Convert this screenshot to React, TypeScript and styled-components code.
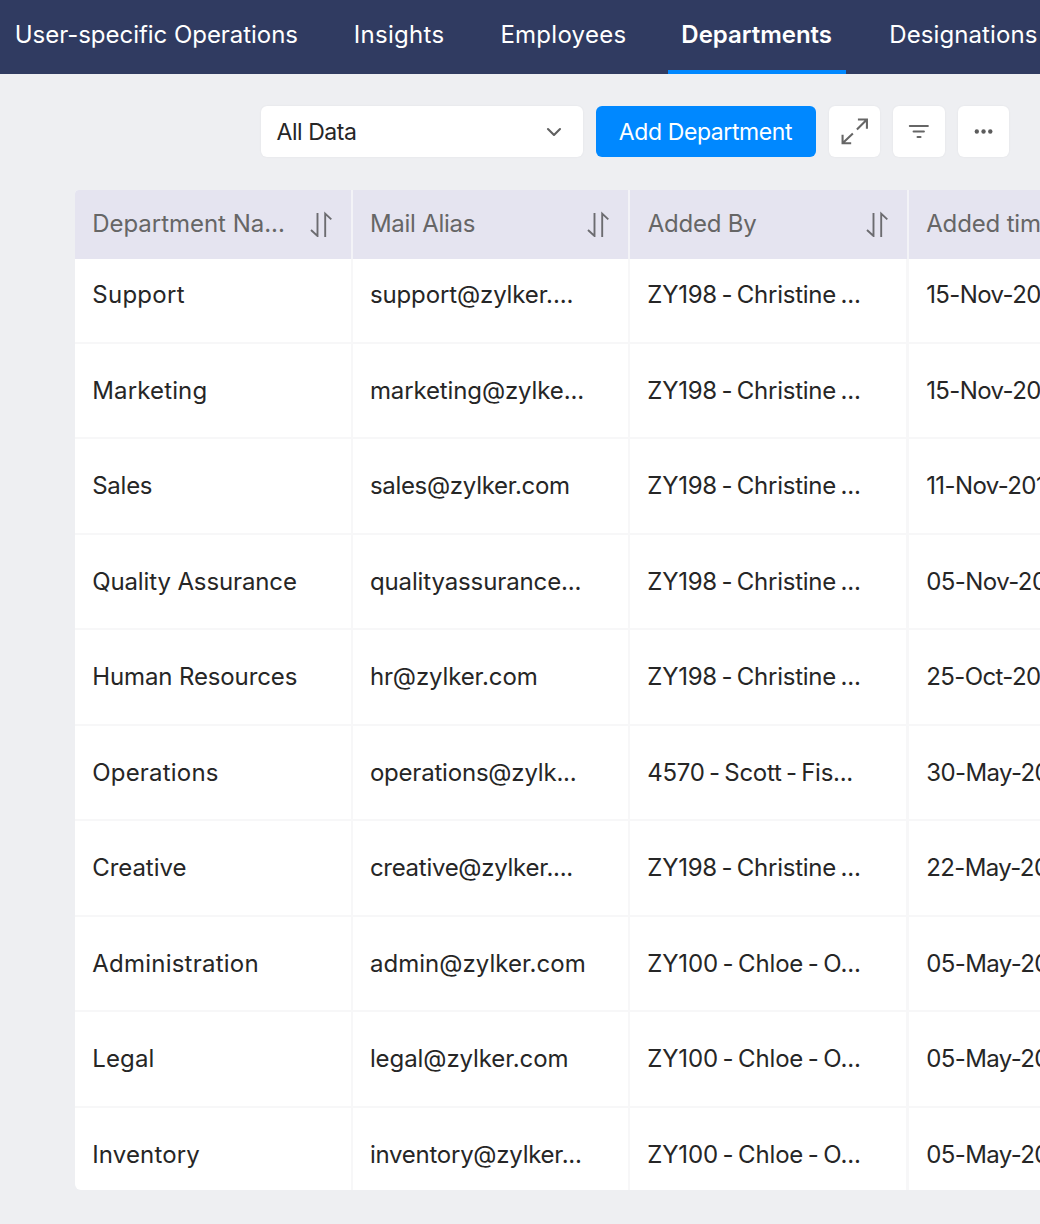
import React from 'react';
import styled, { createGlobalStyle } from 'styled-components';

const GlobalStyle = createGlobalStyle`
  * { box-sizing: border-box; }
  body {
    margin: 0;
    background: #eeeff2;
    font-family: Inter, "Liberation Sans", sans-serif;
    color: #262626;
    overflow: hidden;
  }
`;

const Page = styled.div`
  width: 1040px;
  height: 1224px;
  overflow: hidden;
  background: #eeeff2;
`;

const NavBar = styled.nav`
  display: flex;
  gap: 28.4px;
  height: 74px;
  background: #303b61;
`;

const Tab = styled.div<{ $active?: boolean; $width: number; $track: number }>`
  flex: none;
  width: ${p => p.$width}px;
  padding-left: ${p => (p.$active ? 13.8 : 14.8)}px;
  border-bottom: 4px solid ${p => (p.$active ? '#0088ff' : 'transparent')};
  color: #fff;
  font-size: 24px;
  font-weight: ${p => (p.$active ? 600 : 400)};
  line-height: 69px;
  letter-spacing: ${p => p.$track}px;
  white-space: nowrap;
`;

const Toolbar = styled.div`
  display: flex;
  justify-content: flex-end;
  gap: 13px;
  padding: 32px 31px 33px 0;
`;

const Select = styled.div`
  display: flex;
  align-items: center;
  justify-content: space-between;
  width: 322px;
  height: 51px;
  padding: 0 20px 0 16px;
  border-radius: 6px;
  background: #fff;
  box-shadow: 0 0 2px rgba(60, 60, 80, 0.08);
  font-size: 23px;
  letter-spacing: -0.45px;
`;

const PrimaryButton = styled.button`
  width: 220px;
  height: 51px;
  padding: 0;
  border: 0;
  border-radius: 6px;
  background: #0088ff;
  color: #fff;
  font-family: inherit;
  font-size: 23px;
  letter-spacing: -0.4px;
`;

const IconButton = styled.button`
  display: flex;
  width: 51.5px;
  height: 51px;
  padding: 0;
  border: 0;
  border-radius: 6px;
  background: #fff;
  box-shadow: 0 0 2px rgba(60, 60, 80, 0.08);
`;

const Table = styled.div`
  width: 1110px;
  margin-left: 75px;
  border-radius: 4px 0 0 6px;
  overflow: hidden;
  background: #fff;
`;

const columns = 'grid-template-columns: 277.7px 277.8px 278.5px 276px;';

const HeaderRow = styled.div`
  position: relative;
  z-index: 1;
  display: grid;
  ${columns}
  height: 68.5px;
  background: #e5e4f0;
`;

const HeaderCell = styled.div<{ $track: number }>`
  display: flex;
  align-items: center;
  justify-content: space-between;
  padding: 0 19px 0 17.2px;
  border-right: 2px solid #f3f3f7;
  color: #666;
  font-size: 24px;
  line-height: 68px;
  letter-spacing: ${p => p.$track}px;
  white-space: nowrap;
`;

/* The list is scrolled slightly, so its first row slides under the header. */
const Body = styled.div`
  height: 941.9px;
  margin-top: -10.4px;
  overflow: hidden;
`;

const Row = styled.div`
  display: grid;
  ${columns}
  height: 95.5px;
  border-bottom: 2px solid #f7f7f8;
`;

const Cell = styled.div<{ $track: number; $wide?: boolean }>`
  padding-left: ${p => (p.$wide ? 16.8 : 17.2)}px;
  border-right: ${p => (p.$wide ? 3 : 2)}px solid #f7f7f8;
  font-size: 24px;
  line-height: 94px;
  letter-spacing: ${p => p.$track}px;
  word-spacing: ${p => (p.$wide ? -2 : 0)}px;
  white-space: nowrap;
`;

const SortIcon = () => (
  <svg width="22" height="26" viewBox="0 0 22 26" fill="none" stroke="#6c6c70" strokeWidth="1.9">
    <path d="M1 19L7.5 25V2M15.2 26V2.6L21.3 8.4" />
  </svg>
);

const ChevronIcon = () => (
  <svg width="18" height="12" viewBox="0 0 18 12" fill="none" stroke="#606060" strokeWidth="2.1" strokeLinecap="round" strokeLinejoin="round">
    <path d="M3 3L9 8.9L15 3" />
  </svg>
);

const ExpandIcon = () => (
  <svg width="52" height="51" viewBox="0 0 52 51" fill="none" stroke="#666" strokeWidth="2.1">
    <path d="M29.2 13.4H38.3V22.6M38.3 13.4L28.2 23.4M13.7 28.8V37.4H22.4M13.7 37.4L24.1 27.6" />
  </svg>
);

const FilterIcon = () => (
  <svg width="52" height="51" viewBox="0 0 52 51" fill="none" stroke="#666" strokeWidth="2.1" strokeLinecap="round">
    <path d="M17 20H35.2M20.8 25.5H31.2M24.8 31H27.8" />
  </svg>
);

const MoreIcon = () => (
  <svg width="52" height="51" viewBox="0 0 52 51" fill="#5c5c5c">
    <circle cx="19" cy="25.5" r="2.2" />
    <circle cx="25.8" cy="25.5" r="2.2" />
    <circle cx="32.6" cy="25.5" r="2.2" />
  </svg>
);

// Each label carries its own tracking in pixels.
type Label = [text: string, track: number];

const tabs: { label: Label; width: number; active?: boolean }[] = [
  { label: ['User-specific Operations', -0.04], width: 310.5 },
  { label: ['Insights', 0.3], width: 118.3 },
  { label: ['Employees', 0.27], width: 153.6 },
  { label: ['Departments', -0.02], width: 178.5, active: true },
  { label: ['Designations', 0.1], width: 178 },
];

const headers: Label[] = [
  ['Department Na...', -0.03],
  ['Mail Alias', -0.25],
  ['Added By', -0.2],
  ['Added tim', -0.15],
];

const christine: Label = ['ZY198 - Christine ...', -0.24];
const scott: Label = ['4570 - Scott - Fis...', -0.28];
const chloe: Label = ['ZY100 - Chloe - O...', -0.15];

const rows: Label[][] = [
  [['Support', 0.3], ['support@zylker....', -0.12], christine, ['15-Nov-20', -0.6]],
  [['Marketing', 0.15], ['marketing@zylke...', -0.12], christine, ['15-Nov-20', -0.6]],
  [['Sales', -0.25], ['sales@zylker.com', -0.3], christine, ['11-Nov-201', -0.6]],
  [['Quality Assurance', -0.12], ['qualityassurance...', -0.12], christine, ['05-Nov-20', -0.55]],
  [['Human Resources', -0.12], ['hr@zylker.com', -0.12], christine, ['25-Oct-20', -0.6]],
  [['Operations', 0.2], ['operations@zylk...', -0.2], scott, ['30-May-20', -0.6]],
  [['Creative', -0.05], ['creative@zylker....', -0.28], christine, ['22-May-20', -0.6]],
  [['Administration', 0.24], ['admin@zylker.com', 0.04], chloe, ['05-May-20', -0.6]],
  [['Legal', 0.15], ['legal@zylker.com', -0.08], chloe, ['05-May-20', -0.6]],
  [['Inventory', 0.15], ['inventory@zylker...', -0.25], chloe, ['05-May-20', -0.6]],
];

export default function App() {
  return (
    <Page>
      <GlobalStyle />
      <NavBar>
        {tabs.map(t => (
          <Tab key={t.label[0]} $width={t.width} $track={t.label[1]} $active={t.active}>
            {t.label[0]}
          </Tab>
        ))}
      </NavBar>
      <Toolbar>
        <Select>All Data<ChevronIcon /></Select>
        <PrimaryButton>Add Department</PrimaryButton>
        <IconButton aria-label="Expand"><ExpandIcon /></IconButton>
        <IconButton aria-label="Filter"><FilterIcon /></IconButton>
        <IconButton aria-label="More"><MoreIcon /></IconButton>
      </Toolbar>
      <Table>
        <HeaderRow>
          {headers.map(([text, track]) => (
            <HeaderCell key={text} $track={track}>{text}<SortIcon /></HeaderCell>
          ))}
        </HeaderRow>
        <Body>
          {rows.map((row, r) => (
            <Row key={r}>
              {row.map(([text, track], c) => (
                <Cell key={c} $track={track} $wide={c === 2}>{text}</Cell>
              ))}
            </Row>
          ))}
        </Body>
      </Table>
    </Page>
  );
}
